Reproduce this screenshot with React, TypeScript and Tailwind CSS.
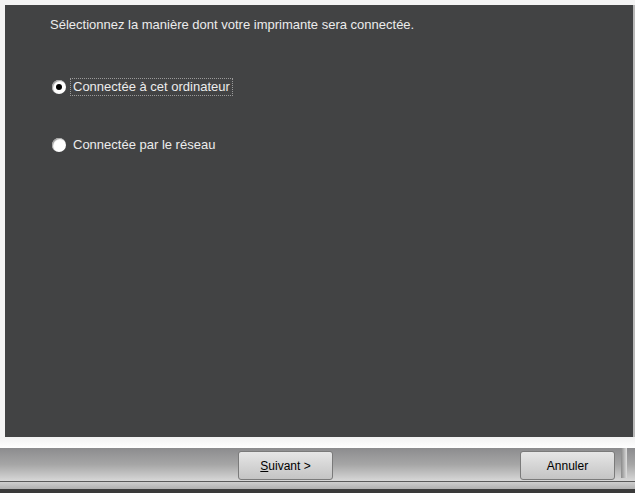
export default function App() {
  const font = { fontFamily: '"Liberation Sans", Arial, sans-serif' };
  return (
    <div className="w-[635px] h-[493px] bg-white flex flex-col overflow-hidden" style={font}>
      <div className="h-[5px] bg-[#f4f4f4]" />
      <div className="flex h-[432px]">
        <div className="w-[5px] bg-[#f4f4f4]" />
        <div className="flex-1 bg-[#424344] flex flex-col pl-[45px] pt-[12px] text-[#ececec] text-[13px]">
          <div className="leading-[15px]">Sélectionnez la manière dont votre imprimante sera connectée.</div>
          <div className="flex items-center mt-[46px] h-[18px]">
            <span className="w-[14px] h-[14px] rounded-full bg-white ml-[2px] flex items-center justify-center shadow-[inset_1px_1px_1px_#9a9a9a]">
              <span className="w-[6px] h-[6px] rounded-full bg-black" />
            </span>
            <span className="ml-[4px] px-[2px] border border-dotted border-[#9a9a9a] leading-[16px]">Connectée à cet ordinateur</span>
          </div>
          <div className="flex items-center mt-[40px] h-[18px]">
            <span className="w-[14px] h-[14px] rounded-full bg-white ml-[2px] shadow-[inset_1px_1px_1px_#9a9a9a]" />
            <span className="ml-[7px] leading-[16px]">Connectée par le réseau</span>
          </div>
        </div>
        <div className="w-[2px] bg-[#b8b8b8]" />
      </div>
      <div className="h-[11px] bg-gradient-to-b from-[#f2f2f2] to-[#ffffff]" />
      <div className="h-[33px] bg-gradient-to-b from-[#8c8c8e] via-[#a6a6a6] to-[#d8d8d8] flex items-start pt-[3px]">
        <button className="ml-[238px] w-[95px] h-[29px] rounded-[3px] border border-[#7a7a7a] bg-gradient-to-b from-[#e6e6e6] to-[#c4c4c4] text-black text-[12px]">
          <span className="underline">S</span>uivant &gt;
        </button>
        <button className="ml-[187px] w-[95px] h-[29px] rounded-[3px] border border-[#7a7a7a] bg-gradient-to-b from-[#e6e6e6] to-[#c4c4c4] text-black text-[12px]">
          Annuler
        </button>
        <div className="ml-[6px] w-[6px] h-[30px] -mt-[3px] bg-gradient-to-r from-[#8a8a8a] to-[#e0e0e0]" />
      </div>
      <div className="h-[1px] bg-[#5a5a5a]" />
      <div className="h-[7px] bg-gradient-to-b from-[#cfcfcf] to-[#b0b0b0]" />
      <div className="flex-1 bg-[#3a3a3a]" />
    </div>
  );
}
